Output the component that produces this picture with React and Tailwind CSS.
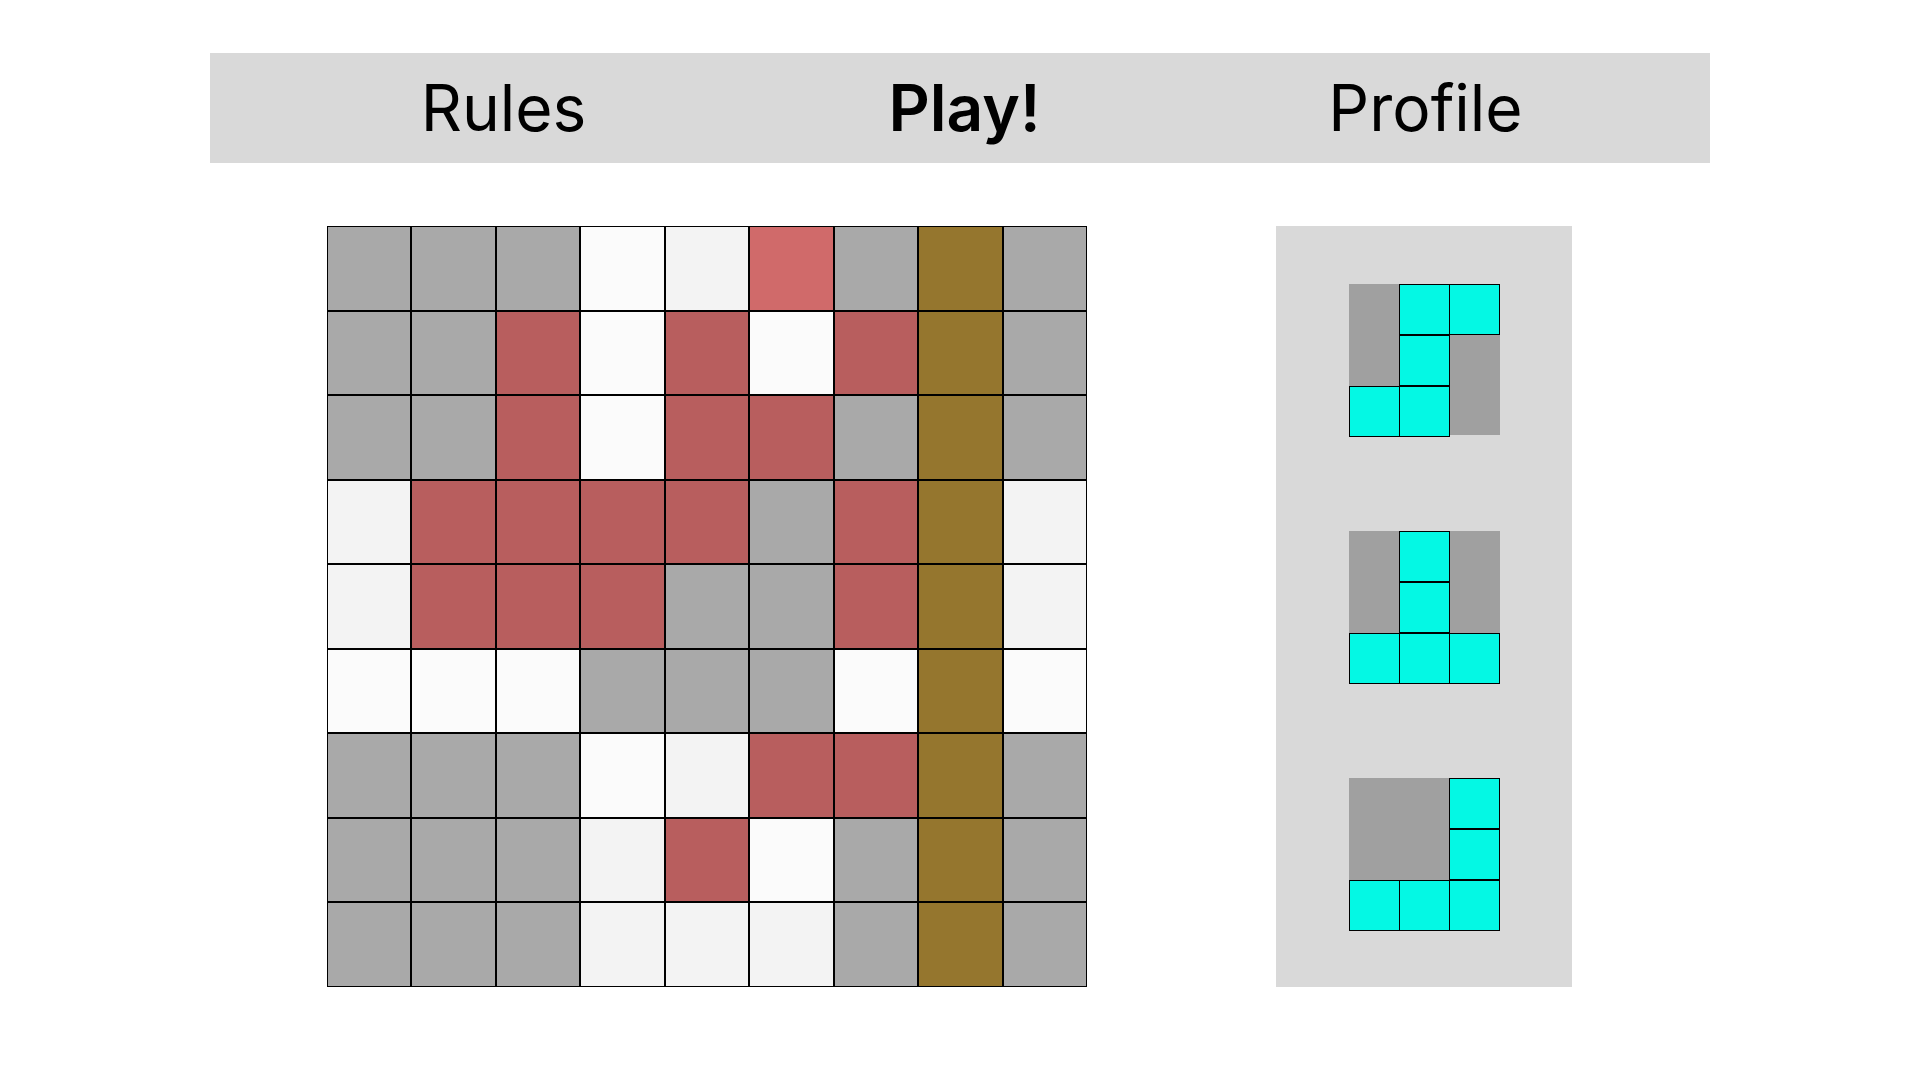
import React from 'react';

const G = 'bg-[#a9a9a9]';
const W = 'bg-[#fbfbfb]';
const L = 'bg-[#f3f3f3]';
const R = 'bg-[#b85e5e]';
const P = 'bg-[#d06a6a]';
const O = 'bg-[#95762e]';

// board layout, row by row
const board = [
  [G, G, G, W, L, P, G, O, G],
  [G, G, R, W, R, W, R, O, G],
  [G, G, R, W, R, R, G, O, G],
  [L, R, R, R, R, G, R, O, L],
  [L, R, R, R, G, G, R, O, L],
  [W, W, W, G, G, G, W, O, W],
  [G, G, G, W, L, R, R, O, G],
  [G, G, G, L, R, W, G, O, G],
  [G, G, G, L, L, L, G, O, G],
];

// pieces in the hand, 1 = block
const pieces = [
  [
    [0, 1, 1],
    [0, 1, 0],
    [1, 1, 0],
  ],
  [
    [0, 1, 0],
    [0, 1, 0],
    [1, 1, 1],
  ],
  [
    [0, 0, 1],
    [0, 0, 1],
    [1, 1, 1],
  ],
];

function Piece({ shape }) {
  return (
    <div className="grid grid-cols-3 w-[151px] h-[151px] bg-[#a0a0a0]">
      {shape.flat().map((v, i) => (
        <div
          key={i}
          className={
            v
              ? 'w-[51px] h-[51px] bg-[#04f8e4] border border-black'
              : 'w-[50px] h-[50px]'
          }
        />
      ))}
    </div>
  );
}

export default function App() {
  return (
    <div className="min-h-screen bg-white pt-[53px]" style={{ fontFamily: 'Inter, "Liberation Sans", sans-serif' }}>
      {/* Nav */}
      <nav className="w-[1500px] mx-auto h-[110px] bg-[#d9d9d9] grid grid-cols-3 items-center pl-[63px] pr-[54px] text-[64px] text-black">
        <span className="text-center">Rules</span>
        <span className="text-center font-semibold">Play!</span>
        <span className="text-center">Profile</span>
      </nav>

      {/* Main */}
      <main className="w-[1500px] mx-auto mt-[63px] flex items-start pl-[117px] gap-[189px]">
        <div className="grid grid-cols-9 w-[760px]">
          {board.flat().map((c, i) => (
            <div key={i} className={`h-[84.5px] border border-black ${c}`} />
          ))}
        </div>

        <aside className="w-[296px] h-[761px] bg-[#d9d9d9] flex flex-col items-center justify-between py-[58px]">
          {pieces.map((p, i) => (
            <Piece key={i} shape={p} />
          ))}
        </aside>
      </main>
    </div>
  );
}
